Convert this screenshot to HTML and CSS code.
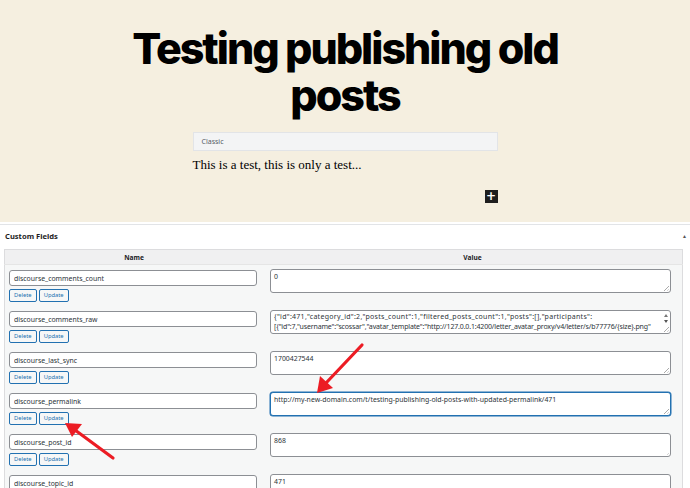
FILE: index.html
```html
<!DOCTYPE html>
<html>
<head>
<meta charset="utf-8">
<link rel="stylesheet" href="styles.css">
</head>
<body>
<div class="page">
  <section class="editor">
    <h1 class="title">Testing publishing old posts</h1>
    <div class="block">
      <div class="classic-bar">Classic</div>
      <p class="para">This is a test, this is only a test...</p>
      <div class="inserter-row"><span class="inserter">+</span></div>
    </div>
  </section>
  <section class="metabox">
    <div class="metabox-head">
      <h2 class="metabox-title">Custom Fields</h2>
      <span class="toggle">&#9650;</span>
    </div>
    <table class="list-table">
      <thead>
        <tr><th class="col-name">Name</th><th class="col-value">Value</th></tr>
      </thead>
      <tbody>
        <tr>
          <td class="col-name"><input class="key" type="text" value="discourse_comments_count"><div class="actions"><span class="btn">Delete</span><span class="btn">Update</span></div></td>
          <td class="col-value"><div class="ta">0</div></td>
        </tr>
        <tr>
          <td class="col-name"><input class="key" type="text" value="discourse_comments_raw"><div class="actions"><span class="btn">Delete</span><span class="btn">Update</span></div></td>
          <td class="col-value"><div class="ta ta-scroll"><div class="ta-text"><span class="l1">{"id":471,"category_id":2,"posts_count":1,"filtered_posts_count":1,"posts":[],"participants":</span><br><span class="l2">[{"id":7,"username":"scossar","avatar_template":"http://127.0.0.1:4200/letter_avatar_proxy/v4/letter/s/b77776/{size}.png"</span></div><div class="sb"><span class="sb-up"></span><span class="sb-down"></span></div></div></td>
        </tr>
        <tr>
          <td class="col-name"><input class="key" type="text" value="discourse_last_sync"><div class="actions"><span class="btn">Delete</span><span class="btn">Update</span></div></td>
          <td class="col-value"><div class="ta">1700427544</div></td>
        </tr>
        <tr>
          <td class="col-name"><input class="key" type="text" value="discourse_permalink"><div class="actions"><span class="btn">Delete</span><span class="btn">Update</span></div></td>
          <td class="col-value"><div class="ta ta-focus">http://my-new-domain.com/t/testing-publishing-old-posts-with-updated-permalink/471</div></td>
        </tr>
        <tr>
          <td class="col-name"><input class="key" type="text" value="discourse_post_id"><div class="actions"><span class="btn">Delete</span><span class="btn">Update</span></div></td>
          <td class="col-value"><div class="ta">868</div></td>
        </tr>
        <tr>
          <td class="col-name"><input class="key" type="text" value="discourse_topic_id"><div class="actions"><span class="btn">Delete</span><span class="btn">Update</span></div></td>
          <td class="col-value"><div class="ta">471</div></td>
        </tr>
      </tbody>
    </table>
  </section>
  <svg class="arrows" width="690" height="488" viewBox="0 0 690 488">
    <g fill="#ec1c24" stroke="#ec1c24" stroke-width="3.2" stroke-linecap="round">
      <line x1="362" y1="345" x2="326" y2="383"/>
      <polygon stroke="none" points="317,393 320,376 333,388"/>
      <line x1="113" y1="458" x2="75" y2="430"/>
      <polygon stroke="none" points="65,423 82,424 72,437"/>
    </g>
  </svg>
</div>
</body>
</html>
```
FILE: styles.css
```css
html, body {
  margin: 0;
  padding: 0;
}
body {
  width: 690px;
  height: 488px;
  overflow: hidden;
  background: #fff;
  font-family: "Noto Sans", "Open Sans", sans-serif;
}
.page {
  position: relative;
  width: 690px;
  height: 488px;
  overflow: hidden;
}
.editor {
  background: #f5efe0;
  height: 222px;
  padding-top: 25px;
  box-sizing: border-box;
}
.title {
  margin: 0 auto;
  width: 460px;
  text-align: center;
  font-family: Inter, "Noto Sans", sans-serif;
  font-weight: 800;
  font-size: 43px;
  line-height: 47px;
  letter-spacing: -0.047em;
  color: #000;
}
.block {
  width: 305px;
  margin: 13px auto 0;
}
.classic-bar {
  height: 19px;
  box-sizing: border-box;
  border: 1px solid #e2e4e7;
  background: #f3f4f5;
  font-family: "Noto Sans", sans-serif;
  font-size: 7px;
  color: #555d66;
  padding: 5px 0 0 8px;
  line-height: 8px;
}
.para {
  margin: 6px 0 0;
  font-family: "Liberation Serif", "Times New Roman", serif;
  font-size: 13px;
  line-height: 16px;
  color: #000;
}
.inserter-row {
  display: flex;
  justify-content: flex-end;
  margin-top: 17px;
  padding-right: 0;
}
.inserter {
  width: 13px;
  height: 13px;
  background: #1e1e1e;
  color: #fff;
  font-family: "DejaVu Sans", sans-serif;
  font-size: 12px;
  line-height: 12px;
  text-align: center;
  font-weight: bold;
}
.metabox {
  border-top: 1px solid #e2e4e7;
  margin-top: 2px;
  background: #fff;
  height: 264px;
}
.metabox-head {
  display: flex;
  justify-content: space-between;
  align-items: center;
  height: 21px;
  padding: 0 3px 0 5px;
}
.metabox-title {
  margin: 0;
  font-size: 7.6px;
  font-weight: 700;
  color: #1e1e1e;
}
.toggle {
  font-size: 5px;
  color: #555;
}
.list-table {
  margin: 3px 0 0 4px;
  width: 679px;
  border-collapse: collapse;
  background: #f6f7f7;
  border: 1px solid #dcdcde;
  table-layout: fixed;
}
.list-table thead th {
  background: #f0f0f1;
  height: 14px;
  padding: 0;
  font-size: 6.6px;
  font-weight: 700;
  color: #1d2327;
  text-align: center;
  border-bottom: 1px solid #e5e5e5;
}
.list-table th.col-name { width: 258px; }
.list-table td {
  vertical-align: top;
  padding: 5px 0 4px 4px;
}
.list-table td.col-value {
  padding: 4px 11px 4px 7px;
}
.key {
  display: block;
  width: 248px;
  height: 16px;
  box-sizing: border-box;
  border: 1px solid #8c8f94;
  border-radius: 3px;
  padding: 0 4px;
  font-family: "Noto Sans", sans-serif;
  font-size: 6.9px;
  color: #2c3338;
  background: #fff;
  margin: 0;
}
.actions {
  display: flex;
  gap: 2px;
  margin-top: 3px;
}
.btn {
  display: block;
  height: 13px;
  box-sizing: border-box;
  border: 1px solid #2271b1;
  border-radius: 2px;
  background: #f6f7f7;
  color: #2271b1;
  font-size: 5.8px;
  line-height: 11px;
  padding: 0 4px;
}
.ta {
  position: relative;
  height: 24px;
  box-sizing: border-box;
  border: 1px solid #8c8f94;
  border-radius: 3px;
  background: #fff;
  font-size: 6.9px;
  line-height: 10px;
  color: #2c3338;
  padding: 2px 3px;
  white-space: nowrap;
  overflow: hidden;
}
.ta::after {
  content: "";
  position: absolute;
  right: 1px;
  bottom: 1px;
  width: 5px;
  height: 5px;
  background: linear-gradient(135deg, transparent 50%, #aaa 50%, transparent 60%, transparent 75%, #aaa 75%, transparent 85%);
}
.ta-focus {
  border-color: #2271b1;
  box-shadow: 0 0 0 0.5px #2271b1;
}
.ta-scroll {
  display: flex;
  padding: 1px 0 0 3px;
}
.ta-text {
  flex: 1;
  overflow: hidden;
  font-size: 7px;
  line-height: 10px;
}
.l1 { letter-spacing: 0.28px; }
.l2 { letter-spacing: -0.16px; }
.sb {
  width: 9px;
  display: flex;
  flex-direction: column;
  justify-content: space-between;
  align-items: center;
  padding: 2px 0 6px;
}
.sb-up, .sb-down {
  width: 0;
  height: 0;
  border-left: 2px solid transparent;
  border-right: 2px solid transparent;
}
.sb-up { border-bottom: 3px solid #777; }
.sb-down { border-top: 3px solid #555; margin-bottom: 4px; }
.arrows {
  position: absolute;
  left: 0;
  top: 0;
  pointer-events: none;
}
```
